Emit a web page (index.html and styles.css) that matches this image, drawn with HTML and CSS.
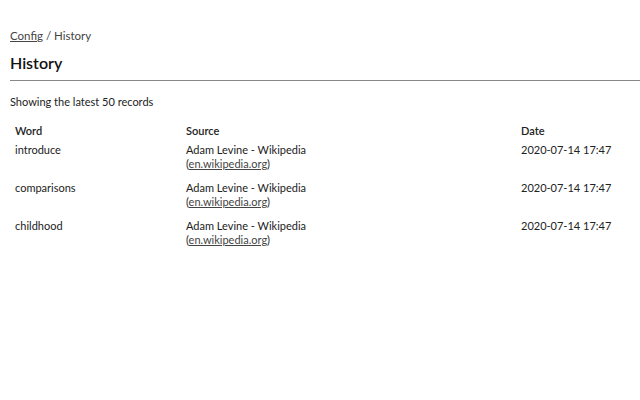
FILE: index.html
```html
<!DOCTYPE html>
<html lang="en">
<head>
  <meta charset="UTF-8" />
  <title>History</title>
  <link rel="stylesheet" href="styles.css">
</head>
<body>
  <div class="crumbs"><a href="#">Config</a> / History</div>
  <h1>History</h1>
  <p class="count">Showing the latest 50 records</p>

  <table class="history">
    <thead>
      <tr>
        <th class="col-word">Word</th>
        <th class="col-source">Source</th>
        <th class="col-date">Date</th>
      </tr>
    </thead>
    <tbody>
      <tr>
        <td>introduce</td>
        <td>Adam Levine - Wikipedia<br>(<a href="#">en.wikipedia.org</a>)</td>
        <td>2020-07-14 17:47</td>
      </tr>
      <tr>
        <td>comparisons</td>
        <td>Adam Levine - Wikipedia<br>(<a href="#">en.wikipedia.org</a>)</td>
        <td>2020-07-14 17:47</td>
      </tr>
      <tr>
        <td>childhood</td>
        <td>Adam Levine - Wikipedia<br>(<a href="#">en.wikipedia.org</a>)</td>
        <td>2020-07-14 17:47</td>
      </tr>
    </tbody>
  </table>
</body>
</html>
```

FILE: styles.css
```css
body {
  font-family: Lato, "Noto Sans", sans-serif;
  font-size: 11px;
  color: #222;
  margin: 0;
  padding: 28px 0 0 10px;
  background: #fff;
}
a {
  color: #444;
}
.crumbs {
  color: #444;
  font-size: 11.5px;
  line-height: 16px;
}
h1 {
  font-size: 16px;
  font-weight: 600;
  margin: 9px 0 0;
  padding-bottom: 8px;
  border-bottom: 1px solid #888;
  color: #111;
}
.count {
  margin: 13px 0 12px;
  line-height: 16px;
}
.history {
  border-collapse: collapse;
  width: 620px;
}
.history th,
.history td {
  text-align: left;
  vertical-align: top;
  padding: 2px 5px;
  line-height: 14px;
}
.history th {
  font-weight: 600;
  padding-bottom: 3px;
}
.history td {
  padding-bottom: 8px;
}
.col-word { width: 161px; }
.col-source { width: 325px; }
```
